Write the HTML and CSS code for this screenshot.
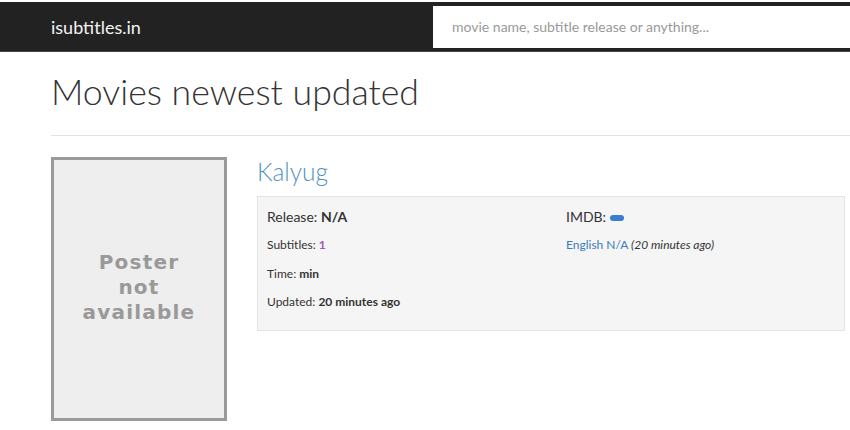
FILE: index.html
```html
<!DOCTYPE html>
<html>
<head>
<meta charset="utf-8">
<link rel="stylesheet" href="styles.css">
</head>
<body>
<div class="topbar">
  <div class="brand">isubtitles.in</div>
  <div class="search">movie name, subtitle release or anything...</div>
</div>
<div class="container">
  <h1 class="page-title">Movies newest updated</h1>
  <div class="rule"></div>
  <div class="movie">
    <div class="poster">
      <div class="poster-text">Poster<br>not<br>available</div>
    </div>
    <div class="details">
      <div class="movie-title">Kalyug</div>
      <div class="info">
        <div class="col">
          <div class="release">Release: <b>N/A</b></div>
          <div class="line">Subtitles: <b class="count">1</b></div>
          <div class="line">Time: <b>min</b></div>
          <div class="line">Updated: <b>20 minutes ago</b></div>
        </div>
        <div class="col">
          <div class="release">IMDB: <span class="badge"></span></div>
          <div class="line"><span class="lang">English N/A</span> <i>(20 minutes ago)</i></div>
        </div>
      </div>
    </div>
  </div>
</div>
</body>
</html>
```
FILE: styles.css
```css
html, body { margin: 0; padding: 0; background: #fff; }
body { font-family: Lato, "Open Sans", sans-serif; color: #333; }
.topbar {
  margin-top: 2px;
  height: 49px;
  background: #222;
  border-bottom: 1px solid #444;
  display: flex;
  align-items: center;
  justify-content: space-between;
}
.brand {
  color: #f2f2f2;
  font-size: 18px;
  padding-left: 51px;
}
.search {
  width: 417px;
  height: 42px;
  background: #fff;
  box-sizing: border-box;
  padding-left: 19px;
  line-height: 42px;
  color: #999;
  font-size: 14px;
}
.container { padding-left: 51px; }
.page-title {
  margin: 0;
  padding-top: 16px;
  font-weight: 300;
  font-size: 35.7px;
  line-height: 48px;
  color: #333;
}
.rule { height: 1px; background: #e2e2e2; margin-top: 19px; }
.movie { display: flex; margin-top: 21px; gap: 30px; }
.poster {
  width: 176px;
  height: 264px;
  box-sizing: border-box;
  border: 3px solid #9a9a9a;
  background: #eee;
  display: flex;
  align-items: center;
  justify-content: center;
}
.poster-text {
  font-family: "DejaVu Sans", Verdana, sans-serif;
  font-weight: bold;
  color: #999;
  font-size: 20px;
  line-height: 25px;
  text-align: center;
  letter-spacing: 1.2px;
  margin-top: -4px;
}
.details { width: 588px; }
.movie-title {
  color: #5592c0;
  font-size: 24.5px;
  font-weight: 300;
  line-height: 30px;
}
.info {
  margin-top: 9px;
  background: #f5f5f5;
  border: 1px solid #e3e3e3;
  height: 135px;
  box-sizing: border-box;
  display: grid;
  grid-template-columns: 299px 1fr;
  padding: 10px 9px;
}
.release { font-size: 14px; line-height: 20px; }
.line { font-size: 12px; line-height: 16px; margin-top: 10px; }
.line + .line { margin-top: 12.5px; }
.count { color: #9b59b6; }
.lang { color: #3b7bb8; }
.badge {
  display: inline-block;
  width: 14px;
  height: 6px;
  border-radius: 3px;
  background: #3a7fcf;
  vertical-align: middle;
}
```
